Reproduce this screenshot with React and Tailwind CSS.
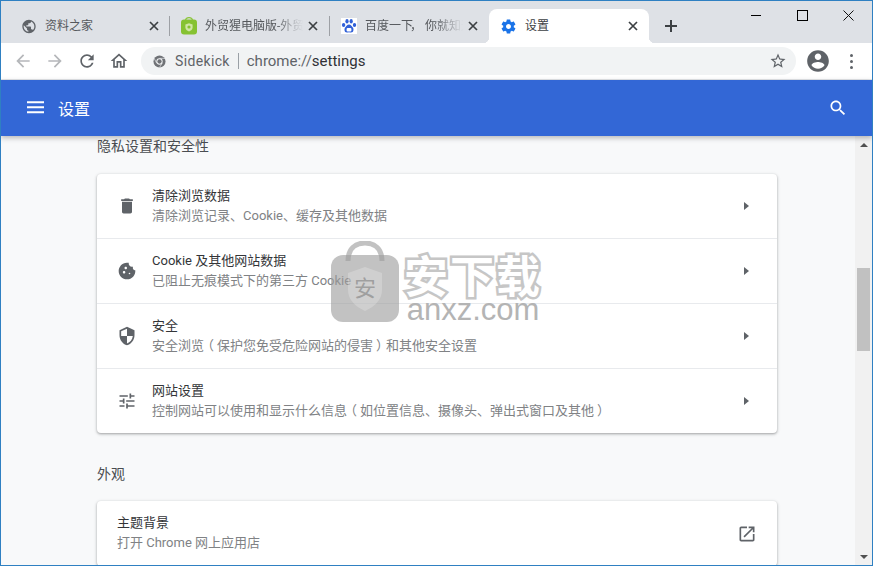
const FONT = "font-['Roboto','Noto_Sans_CJK_SC',sans-serif]";

function Mi({ d, size = 24, className = "", fill = "currentColor" }) {
  return (
    <svg width={size} height={size} viewBox="0 0 24 24" className={className} fill={fill}>
      <path d={d} />
    </svg>
  );
}

const ICONS = {
  trash: "M6 19c0 1.1.9 2 2 2h8c1.1 0 2-.9 2-2V7H6v12zM19 4h-3.5l-1-1h-5l-1 1H5v2h14V4z",
  cookie: "M21.95 10.99c-1.79-.03-3.7-1.95-2.68-4.22-2.97 1-5.78-1.59-5.19-4.56C7.11.74 2 6.41 2 12c0 5.52 4.48 10 10 10 5.89 0 10.54-5.08 9.95-11.01zM8.5 15c-.83 0-1.5-.67-1.5-1.5S7.67 12 8.5 12s1.5.67 1.5 1.5S9.33 15 8.5 15zm2-5C9.67 10 9 9.33 9 8.5S9.67 7 10.5 7s1.5.67 1.5 1.5-.67 1.5-1.5 1.5zm4.5 6c-.55 0-1-.45-1-1s.45-1 1-1 1 .45 1 1-.45 1-1 1z",
  shield: "M12 1L3 5v6c0 5.55 3.84 10.74 9 12 5.16-1.26 9-6.45 9-12V5l-9-4zm0 10.99h7c-.53 4.12-3.28 7.79-7 8.94V12H5V6.3l7-3.11v8.8z",
  tune: "M3 17v2h6v-2H3zM3 5v2h10V5H3zm10 16v-2h8v-2h-8v-2h-2v6h2zM7 9v2H3v2h4v2h2V9H7zm14 4v-2H11v2h10zm-6-4h2V7h4V5h-4V3h-2v6z",
  open: "M19 19H5V5h7V3H5c-1.11 0-2 .9-2 2v14c0 1.1.89 2 2 2h14c1.1 0 2-.9 2-2v-7h-2v7zM14 3v2h3.59l-9.83 9.83 1.41 1.41L19 6.41V10h2V3h-7z",
  search: "M15.5 14h-.79l-.28-.27C15.41 12.59 16 11.11 16 9.5 16 5.91 13.09 3 9.5 3S3 5.91 3 9.5 5.91 16 9.5 16c1.61 0 3.09-.59 4.23-1.57l.27.28v.79l5 4.99L20.49 19l-4.99-5zm-6 0C7.01 14 5 11.99 5 9.5S7.01 5 9.5 5 14 7.01 14 9.5 11.99 14 9.5 14z",
  gear: "M19.43 12.98c.04-.32.07-.64.07-.98s-.03-.66-.07-.98l2.11-1.65c.19-.15.24-.42.12-.64l-2-3.46c-.12-.22-.39-.3-.61-.22l-2.49 1c-.52-.4-1.08-.73-1.69-.98l-.38-2.65C14.46 2.18 14.25 2 14 2h-4c-.25 0-.46.18-.49.42l-.38 2.65c-.61.25-1.17.59-1.69.98l-2.49-1c-.23-.09-.49 0-.61.22l-2 3.46c-.13.22-.07.49.12.64l2.11 1.65c-.04.32-.07.65-.07.98s.03.66.07.98l-2.11 1.65c-.19.15-.24.42-.12.64l2 3.46c.12.22.39.3.61.22l2.49-1c.52.4 1.08.73 1.69.98l.38 2.65c.03.24.24.42.49.42h4c.25 0 .46-.18.49-.42l.38-2.65c.61-.25 1.17-.59 1.69-.98l2.49 1c.23.09.49 0 .61-.22l2-3.46c.12-.22.07-.49-.12-.64l-2.11-1.65zM12 15.5c-1.93 0-3.5-1.57-3.5-3.5s1.57-3.5 3.5-3.5 3.5 1.57 3.5 3.5-1.57 3.5-3.5 3.5z",
  globe: "M12 2C6.48 2 2 6.48 2 12s4.48 10 10 10 10-4.48 10-10S17.52 2 12 2zm-1 17.93c-3.95-.49-7-3.85-7-7.93 0-.62.08-1.21.21-1.79L9 15v1c0 1.1.9 2 2 2v1.93zm6.9-2.54c-.26-.81-1-1.39-1.9-1.39h-1v-3c0-.55-.45-1-1-1H8v-2h2c.55 0 1-.45 1-1V7h2c1.1 0 2-.9 2-2v-.41c2.93 1.19 5 4.06 5 7.41 0 2.08-.8 3.97-2.1 5.39z",
  star: "M22 9.24l-7.19-.62L12 2 9.19 8.63 2 9.24l5.46 4.73L5.82 21 12 17.27 18.18 21l-1.63-7.03L22 9.24zM12 15.4l-3.76 2.27 1-4.28-3.32-2.88 4.38-.38L12 6.1l1.71 4.04 4.38.38-3.32 2.88 1 4.28L12 15.4z",
  account: "M12 2C6.48 2 2 6.48 2 12s4.48 10 10 10 10-4.48 10-10S17.52 2 12 2zm0 3c1.66 0 3 1.34 3 3s-1.34 3-3 3-3-1.34-3-3 1.34-3 3-3zm0 14.2c-2.5 0-4.71-1.28-6-3.22.03-1.99 4-3.08 6-3.08 1.99 0 5.97 1.09 6 3.08-1.29 1.94-3.5 3.22-6 3.22z",
  back: "M20 11H7.83l5.59-5.59L12 4l-8 8 8 8 1.41-1.41L7.83 13H20v-2z",
  forward: "M12 4l-1.41 1.41L16.17 11H4v2h12.17l-5.58 5.59L12 20l8-8z",
  reload: "M17.65 6.35C16.2 4.9 14.21 4 12 4c-4.42 0-7.99 3.58-7.99 8s3.57 8 7.99 8c3.73 0 6.84-2.55 7.73-6h-2.08c-.82 2.33-3.04 4-5.65 4-3.31 0-6-2.69-6-6s2.69-6 6-6c1.66 0 3.14.69 4.22 1.78L13 11h7V4l-2.35 2.35z",
  home: "M12 5.69l5 4.5V18h-2v-6H9v6H7v-7.81l5-4.5M12 3L2 12h3v8h6v-6h2v6h6v-8h3L12 3z",
};

function CloseX({ className = "" }) {
  return (
    <svg width="10" height="10" viewBox="0 0 10 10" className={className}>
      <path d="M1 1l8 8M9 1l-8 8" stroke="#3c4043" strokeWidth="1.7" fill="none" />
    </svg>
  );
}

function BagFav() {
  return (
    <svg width="16" height="18" viewBox="0 0 16 18">
      <path d="M4.5 4C4.5 1.5 6 .6 8 .6s3.5.9 3.5 3.4" stroke="#8dc63f" strokeWidth="1.3" fill="none" />
      <rect x="0" y="2.5" width="16" height="15" rx="3" fill="#86c232" />
      <path d="M8 6.2l3.6 1.2v3c0 2-1.6 3.3-3.6 4-2-.7-3.6-2-3.6-4v-3z" fill="#cfe6a5" />
      <circle cx="8" cy="10" r="1.6" fill="#86c232" />
    </svg>
  );
}

function PawFav() {
  return (
    <svg width="16" height="16" viewBox="0 0 16 16" className="bg-white">
      <g fill="#3060d8">
        <ellipse cx="2.6" cy="7" rx="1.7" ry="2.1" />
        <ellipse cx="6" cy="3.2" rx="1.6" ry="2.2" />
        <ellipse cx="10.2" cy="3.2" rx="1.6" ry="2.2" />
        <ellipse cx="13.5" cy="7" rx="1.7" ry="2.1" />
        <path d="M8 6.5c2 0 2.5 1.7 3.6 2.7 1.4 1.2 1.4 5.3-1.6 5.3-.9 0-1.3-.3-2-.3s-1.2.3-2 .3c-3 0-3-4.1-1.6-5.3C5.5 8.2 6 6.5 8 6.5z" />
      </g>
      <rect x="5.6" y="10" width="4.8" height="3.6" rx="1" fill="#fff" />
    </svg>
  );
}

const L = () => <span className="inline-block -translate-x-[3px]">（</span>;
const R = () => <span className="inline-block translate-x-[3px]">）</span>;

function Tab({ icon, title, fade, wide }) {
  return (
    <div className={"h-[34px] shrink-0 flex items-center justify-between " + (wide ? "w-[168px] pl-[20px] pr-[10px]" : "w-[159px] pl-[11px] pr-[11px]")}>
      <div className="flex items-center min-w-0">
        <div className="w-[16px] h-[18px] flex items-center justify-center shrink-0">{icon}</div>
        <div
          className={
            "ml-[8px] whitespace-nowrap overflow-hidden text-[12px] text-[#55585c] " +
            (fade ? "w-[98px] [mask-image:linear-gradient(to_right,black_70px,transparent_98px)]" : "")
          }
        >
          {title}
        </div>
      </div>
      <CloseX className="shrink-0" />
    </div>
  );
}

const Sep = () => (
  <div className="self-end h-[34px] flex items-center shrink-0">
    <div className="w-px h-[20px] bg-[#9da0a5]" />
  </div>
);

function ToolBtn({ d, color }) {
  return (
    <div className="w-[32px] h-[32px] flex items-center justify-center">
      <Mi d={d} size={20} className={color} />
    </div>
  );
}

function Arrow() {
  return <div className="w-0 h-0 border-y-[4px] border-y-transparent border-l-[5px] border-l-[#5f6368]" />;
}

function Row({ icon, title, sub, first }) {
  return (
    <div className={"flex items-center " + (first ? "h-[64px]" : "h-[65px] border-t border-[#e8eaed]")}>
      <div className="w-[55px] pl-[20px] shrink-0 flex">
        <Mi d={icon} size={20} className="text-[#5f6368]" />
      </div>
      <div className="flex-1 text-[13px] leading-[20px] -mt-[1px]">
        <div className="text-[#333538] h-[19px]">{title}</div>
        <div className="text-[#808285] h-[20px] mt-px">{sub}</div>
      </div>
      <div className="w-[33px] shrink-0 flex justify-start">
        <Arrow />
      </div>
    </div>
  );
}

function Watermark() {
  return (
    <div className="absolute left-[329px] top-[240px] flex pointer-events-none">
      <svg width="70" height="82" viewBox="0 0 70 82">
        <path d="M18 20C18 8 25 2 35 2s17 6 17 18" stroke="#a8a8a8" strokeOpacity=".7" strokeWidth="5" fill="none" />
        <rect x="1" y="14" width="68" height="67" rx="12" fill="#9c9c9c" fillOpacity=".62" />
        <path d="M35 26l17 6v17c0 10-8 17-17 21-9-4-17-11-17-21V32z" fill="#fff" fillOpacity=".22" />
        <text x="35" y="55" textAnchor="middle" fontSize="22" fill="#8a8a8a" fillOpacity=".7" fontFamily="Noto Sans CJK SC, sans-serif">安</text>
      </svg>
      <div className="ml-[4px] mt-[10px] flex flex-col items-center w-[138px]">
        <div className="font-['Noto_Sans_CJK_SC',sans-serif] font-bold text-[44px] leading-[46px] text-white whitespace-nowrap [-webkit-text-stroke:5px_#c6c6c6] [paint-order:stroke_fill] tracking-[2px]">
          安下载
        </div>
        <div className="font-['Liberation_Sans',sans-serif] text-[31px] leading-[30px] text-[#b4b4b4] whitespace-nowrap -mt-[2px]">
          anxz.com
        </div>
      </div>
    </div>
  );
}

export default function App() {
  return (
    <div className={"w-[873px] h-[566px] relative overflow-hidden flex flex-col border border-[#2f80c2] bg-white " + FONT}>
      {/* tab strip */}
      <div className="h-[42px] bg-[#dee1e6] flex items-end shrink-0 relative">
        <Tab wide icon={<Mi d={ICONS.globe} size={17} className="text-[#5f6368]" />} title="资料之家" />
        <Sep />
        <Tab icon={<BagFav />} title="外贸猩电脑版-外贸猩官网" fade />
        <Sep />
        <Tab icon={<PawFav />} title={<>百度一下<span className="inline-block -translate-x-[3px]">，</span>你就知道</>} fade />
        <div className="w-[160px] h-[34px] shrink-0 bg-white rounded-t-[8px] flex items-center relative pl-[11px] pr-[11px]">
          <div className="absolute -left-[6px] bottom-0 w-[6px] h-[6px] bg-[radial-gradient(circle_at_0_0,transparent_6px,white_6.5px)]" />
          <div className="absolute -right-[6px] bottom-0 w-[6px] h-[6px] bg-[radial-gradient(circle_at_100%_0,transparent_6px,white_6.5px)]" />
          <Mi d={ICONS.gear} size={17} className="text-[#1a73e8] shrink-0" />
          <div className="ml-[8px] text-[12px] text-[#3c4043]">设置</div>
          <CloseX className="ml-auto" />
        </div>
        <svg width="14" height="14" viewBox="0 0 14 14" className="ml-[15px] mb-[10px]">
          <path d="M7 1v12M1 7h12" stroke="#3c4043" strokeWidth="2" fill="none" />
        </svg>
        <div className="ml-auto self-start flex items-center h-[28px] mr-[1px]">
          <div className="w-[46px] flex justify-center">
            <div className="w-[10px] h-px bg-black" />
          </div>
          <div className="w-[46px] flex justify-center">
            <div className="w-[11px] h-[11px] border border-black" />
          </div>
          <div className="w-[46px] flex justify-center">
            <svg width="11" height="11" viewBox="0 0 11 11">
              <path d="M.5.5l10 10M10.5.5l-10 10" stroke="#111" strokeWidth="1" fill="none" />
            </svg>
          </div>
        </div>
      </div>

      {/* toolbar */}
      <div className="h-[37px] bg-white flex items-center shrink-0 pl-[6px] pr-[6px] border-b border-[#e3e5e8]">
        <ToolBtn d={ICONS.back} color="text-[#b5b7ba]" />
        <ToolBtn d={ICONS.forward} color="text-[#b5b7ba]" />
        <ToolBtn d={ICONS.reload} color="text-[#5f6368]" />
        <ToolBtn d={ICONS.home} color="text-[#5f6368]" />
        <div className="ml-[6px] w-[655px] h-[28px] rounded-full bg-[#f1f3f4] flex items-center pl-[12px] pr-[9px]">
          <svg width="13" height="13" viewBox="0 0 14 14">
            <circle cx="7" cy="7" r="6.5" fill="#6f7276" />
            <path d="M7 3.6h6M4 8.8L1.2 3.6M9.9 8.8L7 13.4" stroke="#f1f3f4" strokeWidth=".7" fill="none" />
            <circle cx="7" cy="7" r="3.4" fill="#f1f3f4" />
            <circle cx="7" cy="7" r="2.3" fill="#6f7276" />
          </svg>
          <span className="ml-[9px] text-[14px] text-[#5f6368] tracking-[.35px]">Sidekick</span>
          <div className="ml-[8px] w-px h-[16px] bg-[#9aa0a6]" />
          <span className="ml-[8px] text-[15px] text-[#5f6368] whitespace-nowrap">
            chrome://<span className="text-[#303134]">settings</span>
          </span>
          <Mi d={ICONS.star} size={18} className="ml-auto text-[#5f6368]" />
        </div>
        <div className="ml-[9px] w-[26px] flex justify-center">
          <Mi d={ICONS.account} size={26} className="text-[#5f6368]" />
        </div>
        <div className="ml-[17px] flex flex-col gap-[3px] items-center w-[6px]">
          <div className="w-[3px] h-[3px] rounded-full bg-[#5f6368]" />
          <div className="w-[3px] h-[3px] rounded-full bg-[#5f6368]" />
          <div className="w-[3px] h-[3px] rounded-full bg-[#5f6368]" />
        </div>
      </div>

      {/* blue header */}
      <div className="h-[56px] bg-[#3367d6] flex items-center shrink-0 relative z-10 shadow-[0_2px_5px_rgba(60,64,67,.35)] pl-[26px] pr-[24px]">
        <svg width="17" height="13" viewBox="0 0 17 13" className="-mt-[1px]">
          <path d="M0 1.2h17M0 6.2h17M0 11.2h17" stroke="#fff" strokeWidth="2" fill="none" />
        </svg>
        <div className="ml-[14px] text-[16px] text-white mt-[3px]">设置</div>
        <Mi d={ICONS.search} size={20} className="ml-auto text-white" />
      </div>

      {/* content + scrollbar */}
      <div className="flex-1 flex bg-[#f8f9fa] min-h-0">
        <div className="flex-1 overflow-hidden pl-[96px]">
          <div className="w-[680px]">
            <div className="h-[20px] leading-[20px] text-[14px] text-[#4a4d51]">隐私设置和安全性</div>
            <div className="mt-[18px] bg-white rounded-[4px] shadow-[0_1px_2px_rgba(60,64,67,.3),0_1px_3px_1px_rgba(60,64,67,.15)]">
              <Row first icon={ICONS.trash} title="清除浏览数据" sub="清除浏览记录、Cookie、缓存及其他数据" />
              <Row icon={ICONS.cookie} title="Cookie 及其他网站数据" sub="已阻止无痕模式下的第三方 Cookie" />
              <Row icon={ICONS.shield} title="安全" sub={<>安全浏览<L />保护您免受危险网站的侵害<R />和其他安全设置</>} />
              <Row icon={ICONS.tune} title="网站设置" sub={<>控制网站可以使用和显示什么信息<L />如位置信息、摄像头、弹出式窗口及其他<R /></>} />
            </div>
            <div className="mt-[31px] h-[20px] leading-[20px] text-[14px] text-[#4a4d51]">外观</div>
            <div className="mt-[17px] bg-white rounded-[4px] shadow-[0_1px_2px_rgba(60,64,67,.3),0_1px_3px_1px_rgba(60,64,67,.15)]">
              <div className="h-[65px] flex items-center pl-[20px] pr-[20px]">
                <div className="flex-1 text-[13px] leading-[20px] -mt-[1px]">
                  <div className="text-[#333538] h-[19px]">主题背景</div>
                  <div className="text-[#808285] h-[20px] mt-px">打开 Chrome 网上应用店</div>
                </div>
                <Mi d={ICONS.open} size={20} className="text-[#5f6368]" />
              </div>
            </div>
          </div>
        </div>
        <div className="w-[17px] shrink-0 bg-[#f1f1f1] flex flex-col items-center">
          <div className="mt-[7px] w-0 h-0 border-x-[4px] border-x-transparent border-b-[4px] border-b-[#505050]" />
          <div className="mt-[121px] w-[13px] h-[83px] bg-[#c1c1c1]" />
          <div className="mt-auto mb-[6px] w-0 h-0 border-x-[4px] border-x-transparent border-t-[4px] border-t-[#505050]" />
        </div>
      </div>

      <Watermark />
    </div>
  );
}
